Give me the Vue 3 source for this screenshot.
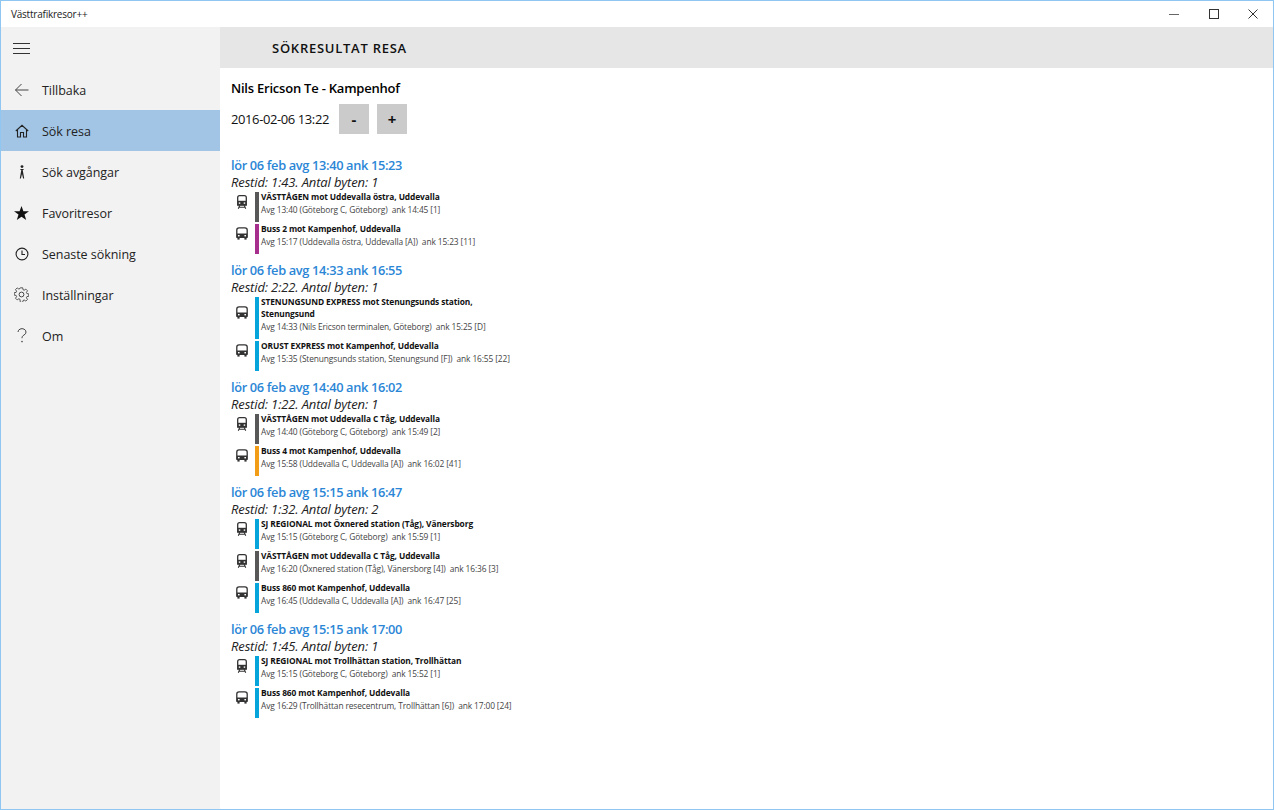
<script setup>
const nav = [
  { label: 'Tillbaka', icon: 'back' },
  { label: 'Sök resa', icon: 'home', active: true },
  { label: 'Sök avgångar', icon: 'stop' },
  { label: 'Favoritresor', icon: 'star' },
  { label: 'Senaste sökning', icon: 'clock' },
  { label: 'Inställningar', icon: 'gear' },
  { label: 'Om', icon: 'help' },
]
const grey = '#585858', purple = '#a62f8e', cyan = '#05a5dc', orange = '#f29d17'
const trips = [
  { title: 'lör 06 feb avg 13:40 ank 15:23', sub: 'Restid: 1:43. Antal byten: 1', legs: [
    { t: 'train', c: grey, h: 'VÄSTTÅGEN mot Uddevalla östra, Uddevalla', d: 'Avg 13:40 (Göteborg C, Göteborg)  ank 14:45 [1]' },
    { t: 'bus', c: purple, h: 'Buss 2 mot Kampenhof, Uddevalla', d: 'Avg 15:17 (Uddevalla östra, Uddevalla [A])  ank 15:23 [11]' },
  ]},
  { title: 'lör 06 feb avg 14:33 ank 16:55', sub: 'Restid: 2:22. Antal byten: 1', legs: [
    { t: 'bus', c: cyan, h: 'STENUNGSUND EXPRESS mot Stenungsunds station, Stenungsund', d: 'Avg 14:33 (Nils Ericson terminalen, Göteborg)  ank 15:25 [D]' },
    { t: 'bus', c: cyan, h: 'ORUST EXPRESS mot Kampenhof, Uddevalla', d: 'Avg 15:35 (Stenungsunds station, Stenungsund [F])  ank 16:55 [22]' },
  ]},
  { title: 'lör 06 feb avg 14:40 ank 16:02', sub: 'Restid: 1:22. Antal byten: 1', legs: [
    { t: 'train', c: grey, h: 'VÄSTTÅGEN mot Uddevalla C Tåg, Uddevalla', d: 'Avg 14:40 (Göteborg C, Göteborg)  ank 15:49 [2]' },
    { t: 'bus', c: orange, h: 'Buss 4 mot Kampenhof, Uddevalla', d: 'Avg 15:58 (Uddevalla C, Uddevalla [A])  ank 16:02 [41]' },
  ]},
  { title: 'lör 06 feb avg 15:15 ank 16:47', sub: 'Restid: 1:32. Antal byten: 2', legs: [
    { t: 'train', c: cyan, h: 'SJ REGIONAL mot Öxnered station (Tåg), Vänersborg', d: 'Avg 15:15 (Göteborg C, Göteborg)  ank 15:59 [1]' },
    { t: 'train', c: grey, h: 'VÄSTTÅGEN mot Uddevalla C Tåg, Uddevalla', d: 'Avg 16:20 (Öxnered station (Tåg), Vänersborg [4])  ank 16:36 [3]' },
    { t: 'bus', c: cyan, h: 'Buss 860 mot Kampenhof, Uddevalla', d: 'Avg 16:45 (Uddevalla C, Uddevalla [A])  ank 16:47 [25]' },
  ]},
  { title: 'lör 06 feb avg 15:15 ank 17:00', sub: 'Restid: 1:45. Antal byten: 1', legs: [
    { t: 'train', c: cyan, h: 'SJ REGIONAL mot Trollhättan station, Trollhättan', d: 'Avg 15:15 (Göteborg C, Göteborg)  ank 15:52 [1]' },
    { t: 'bus', c: cyan, h: 'Buss 860 mot Kampenhof, Uddevalla', d: 'Avg 16:29 (Trollhättan resecentrum, Trollhättan [6])  ank 17:00 [24]' },
  ]},
]
</script>

<template>
  <div class="window">
    <div class="titlebar">
      <span class="apptitle">Västtrafikresor++</span>
      <div class="controls">
        <svg width="10" height="10" viewBox="0 0 10 10"><path d="M0 5.5h10" stroke="#666" stroke-width="1" fill="none" /></svg>
        <svg width="10" height="10" viewBox="0 0 10 10"><rect x=".5" y=".5" width="9" height="9" stroke="#333" stroke-width="1" fill="none" /></svg>
        <svg width="10" height="10" viewBox="0 0 10 10"><path d="M.5.5l9 9M9.5.5l-9 9" stroke="#333" stroke-width="1" fill="none" /></svg>
      </div>
    </div>
    <div class="body">
      <aside class="sidebar">
        <div class="burger">
          <svg width="18" height="11" viewBox="0 0 18 11"><path d="M0 .5h17M0 5.5h17M0 10.5h17" stroke="#333" stroke-width="1" fill="none" /></svg>
        </div>
        <div v-for="n in nav" :key="n.label" class="navitem" :class="{ active: n.active }">
          <span class="navicon">
            <svg v-if="n.icon === 'back'" width="16" height="14" viewBox="0 0 16 14"><path d="M14.5 7H1.5M7.5 1L1.5 7l6 6" stroke="#444" stroke-width="1" fill="none" /></svg>
            <svg v-else-if="n.icon === 'home'" width="14" height="14" viewBox="0 0 14 14"><path d="M.8 7l6.2-5.7L13.2 7M2.5 5.8V13h3V8.5h3V13h3V5.8" stroke="#222" stroke-width="1.1" fill="none" /></svg>
            <svg v-else-if="n.icon === 'stop'" width="10" height="14" viewBox="0 0 10 14"><circle cx="5" cy="1.6" r="1.4" fill="#222" /><path d="M3.4 4h3.2v1H5.700l1.500 8.500H6.100L5 9 3.900 13.500H2.800L4.300 5h-.9z" fill="#222" /></svg>
            <svg v-else-if="n.icon === 'star'" width="15" height="14" viewBox="0 0 15 14"><path d="M7.5 0l1.9 5.2H15l-4.5 3.3L12.2 14 7.5 10.7 2.8 14l1.7-5.5L0 5.2h5.6z" fill="#111" /></svg>
            <svg v-else-if="n.icon === 'clock'" width="14" height="14" viewBox="0 0 14 14"><circle cx="7" cy="7" r="5.9" stroke="#222" stroke-width="1.1" fill="none" /><path d="M7 3.5V7.5H10" stroke="#222" stroke-width="1.1" fill="none" /></svg>
            <svg v-else-if="n.icon === 'gear'" width="15" height="15" viewBox="0 0 15 15"><circle cx="7.5" cy="7.5" r="2.4" stroke="#444" fill="none" /><path d="M6.3.8h2.4l.3 1.9 1.2.5 1.6-1.1 1.7 1.7-1.1 1.6.5 1.2 1.9.3v2.4l-1.9.3-.5 1.2 1.1 1.6-1.7 1.7-1.6-1.1-1.2.5-.3 1.9H6.3L6 12.3l-1.2-.5-1.6 1.1-1.7-1.7 1.1-1.6-.5-1.2L.2 8.1V5.7l1.9-.3.5-1.2-1.1-1.6 1.7-1.7 1.6 1.1L6 1.5z" stroke="#444" stroke-width=".9" fill="none" /></svg>
            <svg v-else width="10" height="15" viewBox="0 0 10 15"><path d="M1 4a4 3.4 0 1 1 6 3c-1.4.9-2 1.5-2 3.2" stroke="#444" stroke-width="1" fill="none" /><circle cx="5" cy="13.6" r=".8" fill="#444" /></svg>
          </span>
          <span class="navlabel">{{ n.label }}</span>
        </div>
      </aside>
      <main class="main">
        <header class="pagehead"><h1>SÖKRESULTAT RESA</h1></header>
        <div class="content">
          <h2 class="route">Nils Ericson Te - Kampenhof</h2>
          <div class="timerow">
            <span class="time">2016-02-06 13:22</span>
            <button class="step">-</button>
            <button class="step">+</button>
          </div>
          <section v-for="(trip, i) in trips" :key="i" class="trip">
            <div class="triptitle">{{ trip.title }}</div>
            <div class="tripsub">{{ trip.sub }}</div>
            <div v-for="(leg, j) in trip.legs" :key="j" class="leg">
              <span class="legicon">
                <svg v-if="leg.t === 'bus'" width="12" height="13" viewBox="0 0 12 13">
                  <path d="M3 .8h6A2.2 2.2 0 0 1 11.2 3v7.2H.8V3A2.2 2.2 0 0 1 3 .8z" fill="#fff" stroke="#333" stroke-width="1.3" />
                  <path d="M.8 6.5h10.4v4.5H.8z" fill="#333" />
                  <rect x="2" y="8" width="1.6" height="1.4" fill="#fff" />
                  <rect x="8.4" y="8" width="1.6" height="1.4" fill="#fff" />
                  <rect x="1.4" y="11" width="2.2" height="1.6" fill="#333" />
                  <rect x="8.4" y="11" width="2.2" height="1.6" fill="#333" />
                </svg>
                <svg v-else width="10" height="14" viewBox="0 0 10 14">
                  <path d="M2.600.7h4.800A1.900 1.900 0 0 1 9.300 2.600V10H.7V2.600A1.900 1.900 0 0 1 2.600.7z" fill="#fff" stroke="#333" stroke-width="1.300" />
                  <path d="M.7 5.800h8.600V10.300H.7z" fill="#333" />
                  <rect x="1.800" y="7.400" width="1.500" height="1.400" fill="#fff" />
                  <rect x="6.700" y="7.400" width="1.500" height="1.400" fill="#fff" />
                  <path d="M2.800 10.300L1.300 13.700M7.200 10.300L8.700 13.700M2 12.300h6" stroke="#333" stroke-width="1.100" fill="none" />
                </svg>
              </span>
              <span class="legbar" :style="{ background: leg.c }"></span>
              <div class="legtext">
                <div class="legh">{{ leg.h }}</div>
                <div class="legd">{{ leg.d }}</div>
              </div>
            </div>
          </section>
        </div>
      </main>
    </div>
  </div>
</template>

<style>
html, body { margin: 0; background: #fff; }
</style>

<style scoped>
.window {
  width: 1274px; height: 810px; box-sizing: border-box;
  border: 1px solid #8fc6f2; background: #fff; overflow: hidden;
  display: flex; flex-direction: column;
  font-family: "Open Sans", "Noto Sans", sans-serif; color: #111;
}
.titlebar { height: 26px; flex: none; display: flex; align-items: center; justify-content: space-between; }
.apptitle { font-size: 10px; margin-left: 10px; color: #222; letter-spacing: -.22px; }
.controls { display: flex; gap: 29.5px; margin-right: 15px; align-items: center; }
.body { flex: 1; display: flex; min-height: 0; }
.sidebar { width: 219px; flex: none; background: #f2f2f2; }
.burger { height: 41px; display: flex; align-items: center; padding: 2px 0 0 12px; box-sizing: border-box; margin-bottom: 1px; }
.navitem { height: 41px; display: flex; align-items: center; }
.navitem.active { background: #a2c5e5; }
.navicon { width: 41px; flex: none; display: flex; justify-content: center; }
.navlabel { font-size: 12.5px; color: #222; letter-spacing: -.05px; padding-top: 1px; }
.main { flex: 1; min-width: 0; display: flex; flex-direction: column; }
.pagehead { height: 41px; flex: none; background: #e6e6e6; display: flex; align-items: center; padding-left: 52px; }
.pagehead h1 { margin: 0; font-size: 13px; font-weight: 600; letter-spacing: .74px; color: #111; }
.content { padding: 11px 0 0 11px; }
.route { margin: 0; font-size: 13px; font-weight: 600; line-height: 18px; color: #000; letter-spacing: -.22px; }
.timerow { display: flex; align-items: center; margin-top: 6px; height: 31px; margin-bottom: 22px; }
.time { font-size: 13px; width: 108px; color: #111; letter-spacing: -.4px; padding-top: 1px; }
.step {
  width: 30px; height: 30px; margin: 0 8px 0 0; padding: 0; border: 0; background: #cbcbcb;
  font: 700 15px "Open Sans", sans-serif; color: #111;
}
.trip { margin-bottom: 7px; }
.triptitle { font-size: 12.8px; line-height: 18px; font-weight: 600; color: #2b86d6; letter-spacing: -.34px; }
.tripsub { font-size: 13px; line-height: 17px; font-style: italic; color: #222; margin-bottom: 1px; letter-spacing: -.14px; }
.leg { display: flex; align-items: stretch; margin-bottom: 2px; min-height: 30px; }
.leg:last-child { margin-bottom: 0; }
.legicon { width: 24px; flex: none; display: flex; align-items: center; justify-content: center; padding: 0 2px 11px 0; box-sizing: border-box; }
.legbar { width: 4px; flex: none; }
.legtext { margin: -1px 0 0 2px; width: 230px; padding-bottom: 6px; }
.legh { font-size: 8.4px; font-weight: 700; line-height: 12px; color: #111; letter-spacing: -.1px; }
.legd { font-size: 8.4px; line-height: 13px; color: #444; white-space: pre; letter-spacing: -.12px; }
</style>
